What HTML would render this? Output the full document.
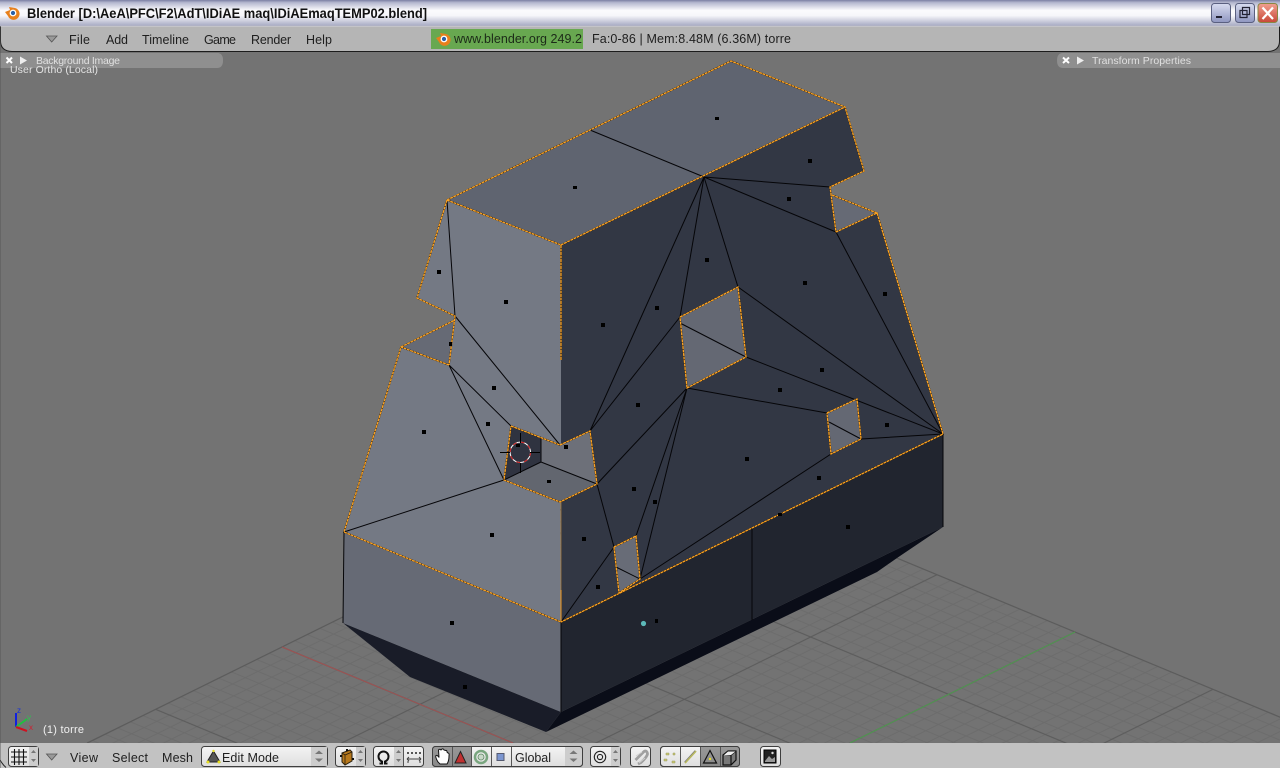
<!DOCTYPE html>
<html><head><meta charset="utf-8"><title>Blender</title>
<style>
html,body{margin:0;padding:0;background:#737373;width:1280px;height:768px;overflow:hidden}
svg{display:block;position:absolute;left:0;top:0}
text{font-family:"Liberation Sans",sans-serif}
</style></head><body>
<svg width="1280" height="768" viewBox="0 0 1280 768" xmlns="http://www.w3.org/2000/svg">
<defs>
<linearGradient id="tb" x1="0" y1="0" x2="0" y2="1"><stop offset="0" stop-color="#7b7fa3"/><stop offset=".1" stop-color="#b4b7cf"/><stop offset=".4" stop-color="#fbfbfd"/><stop offset=".6" stop-color="#f6f6fa"/><stop offset="1" stop-color="#a5a8c2"/></linearGradient>
<linearGradient id="bmin" x1="0" y1="0" x2="0" y2="1"><stop offset="0" stop-color="#d8dcf0"/><stop offset="1" stop-color="#8f96c0"/></linearGradient>
<linearGradient id="bcl" x1="0" y1="0" x2="0" y2="1"><stop offset="0" stop-color="#f0a090"/><stop offset="1" stop-color="#c84838"/></linearGradient>
<linearGradient id="btn" x1="0" y1="0" x2="0" y2="1"><stop offset="0" stop-color="#f4f4f4"/><stop offset="1" stop-color="#dedede"/></linearGradient>
<linearGradient id="dk" x1="0" y1="0" x2="0" y2="1"><stop offset="0" stop-color="#989898"/><stop offset="1" stop-color="#8a8a8a"/></linearGradient>
<pattern id="grid" patternUnits="userSpaceOnUse" width="10" height="10" patternTransform="matrix(-13.8,-5.733,12.633,-6.233,696,819)">
<path fill="#6c6c6c" d="M.955 0h.09v10h-.09zM1.955 0h.09v10h-.09zM2.955 0h.09v10h-.09zM3.955 0h.09v10h-.09zM4.955 0h.09v10h-.09zM5.955 0h.09v10h-.09zM6.955 0h.09v10h-.09zM7.955 0h.09v10h-.09zM8.955 0h.09v10h-.09zM0 .955h10v.09h-10zM0 1.955h10v.09h-10zM0 2.955h10v.09h-10zM0 3.955h10v.09h-10zM0 4.955h10v.09h-10zM0 5.955h10v.09h-10zM0 6.955h10v.09h-10zM0 7.955h10v.09h-10zM0 8.955h10v.09h-10z"/>
<path fill="#5c5c5c" d="M0 0h.05v10h-.05zM9.95 0h.05v10h-.05zM0 0h10v.05h-10zM0 9.95h10v.05h-10z"/>
</pattern>
<g id="logo"><path d="M-7 -1 L-2 -3 L-3 -6 L3 -5 A6 6 0 1 1 -4 3 L-7 -1Z" fill="#e8801c"/><circle cx="1" cy="0" r="3.4" fill="#fff"/><circle cx="1" cy="0" r="2.1" fill="#2a5fa8"/></g>
</defs>

<!-- viewport -->
<rect width="1280" height="768" fill="#737373"/>

<!-- grid -->
<polygon points="661,460 87,743 1280,743 1280,717" fill="url(#grid)"/>
<path d="M661 460L87 743M661 460L1280 717" stroke="#5c5c5c" stroke-width="1" fill="none"/>
<path d="M282 647L513 743" stroke="#a05252" stroke-width="1" fill="none"/>
<path d="M1075 632L850 743" stroke="#4f9a4f" stroke-width="1" fill="none"/>

<!-- mesh faces -->
<polygon points="561,712 943,527 897,558 877,572 546,732" fill="#0a0d18"/>
<polygon points="343,623 410,677 546,732 561,712" fill="#191c28"/>
<polygon points="344,532 561,622 561,712 343,623" fill="#666a75"/>
<polygon points="561,622 943,434 943,527 561,712" fill="#21252f"/>
<polygon points="561,245 845,107 864,171 830,187 836,232 877,213 943,434 561,622 561,502 597,484 590,431 561,445" fill="#323744"/>
<polygon points="447,200 731,61 845,107 561,245" fill="#5f6470"/>
<polygon points="832,195 877,213 836,232" fill="#666a75"/>
<polygon points="447,200 417,298 455,316" fill="#747984"/>
<polygon points="401,347 455,320 449,365" fill="#666a75"/>
<polygon points="447,200 561,245 561,445 511,426 449,365 455,316" fill="#747984"/>
<polygon points="344,532 401,347 449,365 511,426 504,480" fill="#747984"/>
<polygon points="344,532 504,480 560,502 561,622" fill="#747984"/>
<polygon points="511,426 541,438 541,462 504,480" fill="#2f3340"/>
<polygon points="541,438 560,445 590,431 597,484 541,462" fill="#6d7079"/>
<polygon points="541,462 597,484 560,502 504,480" fill="#62666f"/>
<polygon points="680,317 738,287 746,357 687,388" fill="#646873"/>
<polygon points="827,413 857,399 861,439 831,454" fill="#646873"/>
<polygon points="614,547 636,536 640,579 619,593" fill="#686c77"/>

<!-- black edges -->
<g stroke="#050508" stroke-width="1" fill="none">
<path d="M590 130L704 177M704 177L590 431M680 317L590 431M704 177L680 317M704 177L738 287M704 177L830 187M704 177L836 232M836 232L943 434M738 287L943 434M746 357L943 434M687 388L827 413M861 439L943 434M831 454L640 579M687 388L636 536M687 388L640 579M597 484L687 388M597 484L614 547M614 547L561 622"/>
<path d="M447 200L455 316M455 316L560 445M449 365L511 426M449 365L504 480M344 532L504 480M541 438V462M541 462L597 484M541 462L504 480"/>
<path d="M680 323L746 357M829 422L861 439M616 567L640 579"/>
<path d="M561 622V712M344 532L343 623M752 528V620M943 434V527"/>
</g>

<!-- orange edges -->
<g fill="none" stroke-linejoin="miter">
<path d="M447 200L731 61L845 107L864 171L830 187L836 232M832 195L877 213L836 232M877 213L943 434L561 622M447 200L561 245L845 107M447 200L417 298L455 316L449 365M401 347L455 320M449 365L401 347L344 532L561 622M561 245V360M511 426L560 445L590 431L597 484L560 502L504 480L511 426M680 317L738 287L746 357L687 388L680 317M827 413L857 399L861 439L831 454L827 413M614 547L636 536L640 579L619 593L614 547" stroke="#000" stroke-width="1.500"/>
<path d="M447 200L731 61L845 107L864 171L830 187L836 232M832 195L877 213L836 232M877 213L943 434L561 622M447 200L561 245L845 107M447 200L417 298L455 316L449 365M401 347L455 320M449 365L401 347L344 532L561 622M561 245V360M511 426L560 445L590 431L597 484L560 502L504 480L511 426M680 317L738 287L746 357L687 388L680 317M827 413L857 399L861 439L831 454L827 413M614 547L636 536L640 579L619 593L614 547" stroke="#ffa422" stroke-width="1.300" stroke-dasharray="3 .5"/>
<path d="M561 590V622" stroke="#f39a1e" stroke-width="1"/>
<path d="M561 502V590" stroke="#c58a3a" stroke-width=".6"/>
</g>

<!-- face dots -->
<path fill="#000" d="M715 117h4v3h-4zM573 186h4v3h-4zM808 159h4v4h-4zM787 197h4v4h-4zM437 270h4v4h-4zM504 300h4v4h-4zM705 258h4v4h-4zM803 281h4v4h-4zM883 292h4v4h-4zM601 323h4v4h-4zM655 306h4v4h-4zM449 342h3v4h-3zM820 368h4v4h-4zM492 386h4v4h-4zM778 388h4v4h-4zM636 403h4v4h-4zM486 422h4v4h-4zM422 430h4v4h-4zM885 423h4v4h-4zM564 445h4v4h-4zM745 457h4v4h-4zM547 480h4v3h-4zM817 476h4v4h-4zM632 487h4v4h-4zM653 500h4v4h-4zM778 513h4v3h-4zM846 525h4v4h-4zM490 533h4v4h-4zM582 537h4v4h-4zM596 585h4v4h-4zM450 621h4v4h-4zM655 619h3v4h-3zM463 685h4v4h-4zM516 444h4v3h-4z"/>
<circle cx="643.5" cy="623.5" r="2.6" fill="#5cb8b8"/>

<!-- 3D cursor -->
<g fill="none">
<circle cx="520.3" cy="452.3" r="10.2" stroke="#fff" stroke-width="1"/>
<circle cx="520.3" cy="452.3" r="10.2" stroke="#d01818" stroke-width="1" stroke-dasharray="4 4"/>
<path d="M500 452.5H510M530 452.5H540M520.5 433V443M520.5 463V473" stroke="#000" stroke-width="1"/>
</g>

<!-- panels -->
<path d="M0 53H217Q223 53 223 60.500Q223 68 217 68H0Z" fill="#8f8f8f"/>
<path d="M1280 53H1063Q1057 53 1057 60.500Q1057 68 1063 68H1280Z" fill="#8f8f8f"/>
<text x="10" y="73" font-size="10.500" fill="#e4e4e4" textLength="88">User Ortho (Local)</text>
<path d="M0 53H217Q223 53 223 60.500Q223 64 221 65H0Z" fill="#8f8f8f"/>
<path d="M6.500 57.500L12 63M12 57.500L6.500 63" stroke="#fff" stroke-width="2"/>
<path d="M20 56.500L27 60.500L20 64.500Z" fill="#eee"/>
<text x="36" y="64" font-size="10.500" fill="#e0e0e0" textLength="84">Background Image</text>
<path d="M1063 57.500L1069 63M1069 57.500L1063 63" stroke="#fff" stroke-width="2"/>
<path d="M1077 56.500L1084 60.500L1077 64.500Z" fill="#eee"/>
<text x="1092" y="64" font-size="10.500" fill="#e0e0e0" textLength="99">Transform Properties</text>

<!-- title bar -->
<rect width="1280" height="26" fill="url(#tb)"/>
<rect y="25" width="1280" height="1" fill="#8b8fae"/>
<use href="#logo" transform="translate(12,13)"/>
<text x="27" y="18" font-size="14" font-weight="700" fill="#111" textLength="400" lengthAdjust="spacingAndGlyphs">Blender [D:\AeA\PFC\F2\AdT\IDiAE maq\IDiAEmaqTEMP02.blend]</text>
<rect x="1211.500" y="3.500" width="19" height="19" rx="3" fill="url(#bmin)" stroke="#5a6080"/>
<rect x="1216" y="16" width="6" height="2" fill="#223"/>
<rect x="1235.500" y="3.500" width="19" height="19" rx="3" fill="url(#bmin)" stroke="#5a6080"/>
<path d="M1242.500 7.500h7v7h-7zM1240 10.500h7v7h-7z" fill="none" stroke="#223" stroke-width="1.200"/>
<rect x="1258" y="3.500" width="19.500" height="19" rx="3" fill="url(#bcl)" stroke="#884"/>
<path d="M1262.500 7.500L1273 19M1273 7.500L1262.500 19" stroke="#fff" stroke-width="2.200"/>

<!-- top header -->
<path d="M.5 26H1279.500V41Q1279.500 51 1268 51.500H12Q.5 51 .5 41Z" fill="#b5b5b5" stroke="#1c1c1c" stroke-width="1"/>
<rect y="25.500" width="1280" height="1" fill="#d4d4dc"/>
<path d="M46.500 36H57L51.700 42Z" fill="#999" stroke="#555" stroke-width=".8"/>
<g font-size="12.500" fill="#1e1e1e">
<text x="69" y="44" textLength="21">File</text>
<text x="106" y="44" textLength="22">Add</text>
<text x="142" y="44" textLength="47">Timeline</text>
<text x="204" y="44" textLength="32">Game</text>
<text x="251" y="44" textLength="40">Render</text>
<text x="306" y="44" textLength="26">Help</text>
</g>
<rect x="431" y="29" width="152" height="20" fill="#68a850"/>
<use href="#logo" transform="translate(443,39)"/>
<text x="454" y="43" font-size="12.500" fill="#1c2a18" textLength="128">www.blender.org 249.2</text>
<text x="592" y="43" font-size="12.500" fill="#1e1e1e" textLength="199">Fa:0-86 | Mem:8.48M (6.36M) torre</text>

<!-- axis widget and label -->
<path d="M16 727V713" stroke="#1020e0" stroke-width="2"/>
<path d="M16 727L27 719" stroke="#20c040" stroke-width="2"/>
<path d="M16 727L27 731" stroke="#d01020" stroke-width="2"/>
<text x="17" y="713" font-size="8" fill="#1830d8">z</text>
<text x="27" y="720" font-size="8" fill="#30c050">y</text>
<text x="29" y="730" font-size="8" fill="#d02030">x</text>
<text x="43" y="733" font-size="11" fill="#f0f0f0" textLength="41">(1) torre</text>

<!-- bottom header -->
<rect y="743" width="1280" height="25" fill="#c2c2c2"/>
<path d="M0 760Q3 765 6 767.500" fill="none" stroke="#222" stroke-width="1"/>

<g stroke="#3e3e3e" stroke-width="1">
<rect x="8.500" y="746.500" width="30" height="20" rx="3" fill="url(#btn)"/>
<rect x="201.500" y="746.500" width="126" height="20" rx="3" fill="url(#btn)"/>
<rect x="335.500" y="746.500" width="30" height="20" rx="3" fill="url(#btn)"/>
<rect x="373.500" y="746.500" width="50" height="20" rx="3" fill="url(#btn)"/>
<rect x="432.500" y="746.500" width="150" height="20" rx="3" fill="url(#btn)"/>
<rect x="590.500" y="746.500" width="30" height="20" rx="3" fill="url(#btn)"/>
<rect x="630.500" y="746.500" width="20" height="20" rx="3" fill="url(#btn)"/>
<rect x="660.500" y="746.500" width="79" height="20" rx="3" fill="url(#btn)"/>
<rect x="760.500" y="746.500" width="20" height="20" rx="3" fill="url(#btn)"/>
</g>
<!-- arrow regions -->
<g fill="#cdcdcd">
<rect x="29" y="747" width="9" height="19"/><rect x="311" y="747" width="16" height="19"/><rect x="356" y="747" width="9" height="19"/><rect x="394" y="747" width="9" height="19"/><rect x="565" y="747" width="17" height="19"/><rect x="611" y="747" width="9" height="19"/>
</g>
<path d="M433 747h38v19h-38z" fill="url(#dk)"/>
<path d="M701 747h38v19h-38z" fill="url(#dk)"/>
<path d="M452.500 747V766M471.500 747V766M491.500 747V766M511.500 747V766M680.500 747V766M700.500 747V766M720.500 747V766M403.500 747V766" stroke="#555" stroke-width="1"/>
<rect x="432.500" y="746.500" width="150" height="20" rx="3" fill="none" stroke="#3e3e3e"/>
<rect x="660.500" y="746.500" width="79" height="20" rx="3" fill="none" stroke="#3e3e3e"/>
<!-- up/down arrows -->
<g fill="#777">
<path d="M33.500 750l-2.500 3h5zM33.500 762l-2.500-3h5zM319 750.500l-4 3.500h8zM319 762l-4-3.500h8zM360.500 750l-2.500 3h5zM360.500 762l-2.500-3h5zM398.500 750l-2.500 3h5zM398.500 762l-2.500-3h5zM573.500 750.500l-4 3.500h8zM573.500 762l-4-3.500h8zM615.500 750l-2.500 3h5zM615.500 762l-2.500-3h5z"/>
</g>
<!-- grid icon -->
<path d="M11 752H27M11 757H27M11 762H27M14.500 749V765M19 749V765M23.500 749V765" stroke="#111" stroke-width="1.100"/>
<path d="M46.500 754H57L51.700 760Z" fill="#999" stroke="#555" stroke-width=".8"/>
<g font-size="12.500" fill="#1e1e1e">
<text x="70" y="762" textLength="28">View</text>
<text x="112" y="762" textLength="36">Select</text>
<text x="162" y="762" textLength="31">Mesh</text>
<text x="222" y="762" textLength="57">Edit Mode</text>
<text x="515" y="762" textLength="36">Global</text>
</g>
<!-- edit mode icon -->
<path d="M213.500 751L220 762H207Z" fill="#555" stroke="#222" stroke-width="1"/>
<circle cx="213.500" cy="751" r="1.200" fill="#e8e020"/><circle cx="208" cy="762" r="1.500" fill="#e8e020"/><circle cx="219" cy="762" r="1.500" fill="#e8e020"/>
<!-- cube icon -->
<path d="M342 753L350 750L352 752V761L345 765L342 762Z" fill="#b8791c" stroke="#2a2010" stroke-width="1"/>
<path d="M342 753L345 755L352 752M345 755V765" fill="none" stroke="#2a2010" stroke-width=".8"/>
<rect x="340" y="755" width="2" height="2" fill="#111"/><rect x="352" y="758" width="2" height="2" fill="#111"/><rect x="346" y="749" width="2" height="2" fill="#111"/>
<!-- omega icon -->
<path d="M379.500 763.500H382V761.500Q378.500 760 378.500 756.500A5 5 0 0 1 388.500 756.500Q388.500 760 385 761.500V763.500H387.500" fill="none" stroke="#111" stroke-width="2"/>
<!-- arrows icon -->
<path d="M407 752h2v2h-2zM411 752h2v2h-2zM415 752h2v2h-2zM419 752h2v2h-2z" fill="#555"/>
<path d="M407 759H421M407 759l2-2M407 759l2 2M421 759l-2-2M421 759l-2 2M407 762h2M419 762h2" stroke="#444" stroke-width="1" fill="none"/>
<!-- hand -->
<path d="M438 762Q435 757 436 755.500Q437.500 755 439 757.500L438.500 750Q440 748.500 441 750L442 749Q443.500 748.500 444 750L445.500 750.500Q447 750 447 752L448 753Q449.500 753 449 756Q449 761 447 764H440Z" fill="#fff" stroke="#111" stroke-width="1"/>
<!-- red triangle -->
<path d="M460.500 751.500L466 763H455Z" fill="#c03030" stroke="#222" stroke-width="1"/>
<!-- green ring -->
<circle cx="481" cy="757" r="6" fill="none" stroke="#79a67f" stroke-width="2.500"/>
<circle cx="481" cy="757" r="3" fill="#c8d8c8" stroke="#5d8863" stroke-width=".8"/>
<!-- blue square -->
<rect x="497" y="753.500" width="7" height="7" fill="#7c96d0" stroke="#555a70" stroke-width="1"/>
<!-- pivot -->
<circle cx="600" cy="757" r="5.700" fill="none" stroke="#222" stroke-width="1.100"/>
<circle cx="600" cy="757" r="2.600" fill="none" stroke="#222" stroke-width="1.100"/>
<!-- magnet -->
<path d="M635.500 760L644 751.500Q647 750 647.500 754Q647 757 641 762.500L638 764" fill="none" stroke="#a0a0a0" stroke-width="2.800"/>
<path d="M636 756L642 752M639 763L645 758" stroke="#d0d0d0" stroke-width="1"/>
<!-- select modes -->
<path d="M666 753h3v2h-3zM673 753h2v2h-2zM664 759h3v2h-3zM672 761h3v2h-3z" fill="#c8c870" stroke="#9a9a60" stroke-width=".5"/>
<path d="M685 763L696 751" stroke="#b8b860" stroke-width="1.800"/><path d="M684.500 762L695 750.500" stroke="#777" stroke-width=".6"/>
<path d="M710 750.500L716.500 763H703.500Z" fill="none" stroke="#111" stroke-width="1.200"/><circle cx="710" cy="759" r="1.200" fill="#e8e020"/>
<path d="M723 755L728 751H736V760L731 765H723Z" fill="#787878" stroke="#111" stroke-width="1.200"/><path d="M723 755H731V765M731 755L736 751" fill="none" stroke="#111" stroke-width="1.200"/><path d="M723.500 755.500L728 751.500H735.500L731 755Z" fill="#eee"/>
<!-- render icon -->
<rect x="764" y="750" width="12" height="13" fill="#222" stroke="#000"/>
<path d="M765 761L769 756L772 759L775 757V762H765Z" fill="#999"/><circle cx="772.500" cy="753" r="1.200" fill="#ddd"/>
<rect x="0" y="26" width="1" height="742" fill="#555" opacity=".45"/>
</svg>
</body></html>
